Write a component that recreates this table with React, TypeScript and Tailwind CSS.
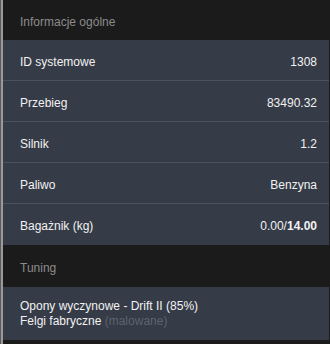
import React from "react";

interface Row {
  label: string;
  value: React.ReactNode;
}

const rows: Row[] = [
  { label: "ID systemowe", value: "1308" },
  { label: "Przebieg", value: "83490.32" },
  { label: "Silnik", value: "1.2" },
  { label: "Paliwo", value: "Benzyna" },
  {
    label: "Bagażnik (kg)",
    value: (
      <>
        0.00/<b className="font-bold">14.00</b>
      </>
    ),
  },
];

const SectionHeader: React.FC<{ title: string; h: string }> = ({ title, h }) => (
  <div className={`flex items-center bg-[#1b1b1b] pl-[17px] pt-[3px] text-[12px] text-[#8c8c8c] ${h}`}>
    {title}
  </div>
);

export default function App() {
  return (
    <div
      className="flex h-[344px] w-[330px] bg-[#1b1b1b]"
      style={{ fontFamily: '"Liberation Sans", Arial, sans-serif' }}
    >
      <div className="flex w-[3px]">
        <div className="w-px bg-[#5a5a5a]" />
        <div className="w-[2px] bg-[#9a9a9a]" />
      </div>
      <div className="flex w-[326px] flex-col">
        <SectionHeader title="Informacje ogólne" h="h-[40px]" />
        {rows.map((r, i) => (
          <div
            key={r.label}
            className={`flex h-[41px] items-center justify-between bg-[#353b47] pl-[17px] pr-3 pt-[3px] text-[12px] text-[#f2f2f2] ${
              i < rows.length - 1 ? "border-b border-[#4a505c]" : ""
            }`}
          >
            <span>{r.label}</span>
            <span>{r.value}</span>
          </div>
        ))}
        <SectionHeader title="Tuning" h="h-[42px]" />
        <div className="flex h-[53px] flex-col justify-center bg-[#353b47] pl-[17px] text-[12px] leading-[15px] text-[#f2f2f2]">
          <div>Opony wyczynowe - Drift II (85%)</div>
          <div>
            Felgi fabryczne <span className="text-[#5d6470]">(malowane)</span>
          </div>
        </div>
      </div>
      <div className="w-px bg-[#1b1b1b]" />
    </div>
  );
}
